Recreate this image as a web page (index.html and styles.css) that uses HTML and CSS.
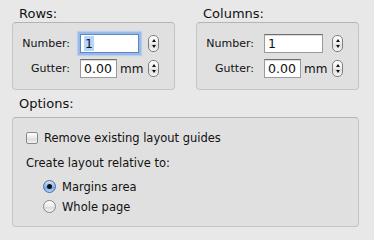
FILE: index.html
```html
<!DOCTYPE html>
<html lang="en">
<head>
    <meta charset="UTF-8">
    <title>Create Layout Guides</title>
    <link rel="stylesheet" href="styles.css">
</head>
<body>

<div class="dialog">
    <div class="top-row">
        <div class="group">
            <div class="group-title">Rows:</div>
            <div class="group-box grid-box">
                <div class="field">
                    <label class="field-label">Number:</label>
                    <span class="text-input wide focused"><span class="sel">1</span></span>
                    <span class="stepper"><i class="up"></i><i class="down"></i></span>
                </div>
                <div class="field">
                    <label class="field-label">Gutter:</label>
                    <span class="text-input narrow">0.00</span>
                    <span class="unit">mm</span>
                    <span class="stepper"><i class="up"></i><i class="down"></i></span>
                </div>
            </div>
        </div>
        <div class="group">
            <div class="group-title">Columns:</div>
            <div class="group-box grid-box">
                <div class="field">
                    <label class="field-label">Number:</label>
                    <span class="text-input wide">1</span>
                    <span class="stepper"><i class="up"></i><i class="down"></i></span>
                </div>
                <div class="field">
                    <label class="field-label">Gutter:</label>
                    <span class="text-input narrow">0.00</span>
                    <span class="unit">mm</span>
                    <span class="stepper"><i class="up"></i><i class="down"></i></span>
                </div>
            </div>
        </div>
    </div>

    <div class="group">
        <div class="group-title">Options:</div>
        <div class="group-box options-box">
            <div class="check-row">
                <span class="checkbox"></span>
                <span>Remove existing layout guides</span>
            </div>
            <div class="caption">Create layout relative to:</div>
            <div class="radio-row">
                <span class="radio on"></span>
                <span>Margins area</span>
            </div>
            <div class="radio-row">
                <span class="radio"></span>
                <span>Whole page</span>
            </div>
        </div>
    </div>
</div>

</body>
</html>
```

FILE: styles.css
```css
body {
    margin: 0;
    background: #e8e8e8;
    font-family: "DejaVu Sans", Verdana, sans-serif;
    font-size: 11px;
    color: #111;
}
.dialog {
    width: 347px;
    padding: 6px 0 0 12px;
}
.top-row {
    display: flex;
    gap: 21px;
    margin-bottom: 6px;
}
.top-row .group {
    width: 163px;
}
.group-title {
    font-size: 13px;
    line-height: 16px;
    padding-left: 7px;
}
.group-box {
    background: #e0e0e0;
    border: 1px solid #c4c4c4;
    border-top-color: #b4b4b4;
    border-radius: 4px;
    box-sizing: border-box;
}
.grid-box {
    height: 68px;
    padding: 11px 0 0 0;
    display: flex;
    flex-direction: column;
    gap: 6px;
}
.field {
    display: flex;
    align-items: center;
    width: 146px;
    height: 19px;
}
.field > * {
    flex-shrink: 0;
}
.field-label {
    width: 57px;
    text-align: right;
    padding-right: 10px;
    font-size: 11px;
}
.text-input {
    box-sizing: border-box;
    height: 19px;
    background: #fff;
    border: 1px solid #9a9a9a;
    border-top-color: #6e6e6e;
    box-shadow: inset 0 1px 1px rgba(0, 0, 0, 0.15);
    font-size: 12.5px;
    line-height: 17px;
    padding-left: 3px;
}
.text-input.wide {
    width: 59px;
}
.text-input.narrow {
    width: 37px;
}
.text-input.focused {
    border-color: #5d86c4;
    box-shadow: 0 0 0 2px #9ab9e6, 0 0 1px 3px #b9cfee;
}
.sel {
    background: #b5d5ff;
    padding: 0 1px;
}
.unit {
    font-size: 12px;
    padding-left: 3px;
}
.stepper {
    box-sizing: border-box;
    margin-left: auto;
    width: 11px;
    height: 17px;
    border: 1px solid #7f7f7f;
    border-radius: 5px;
    background: linear-gradient(#ffffff, #ececec 50%, #dcdcdc 51%, #f6f6f6);
    display: flex;
    flex-direction: column;
    align-items: center;
    justify-content: center;
    gap: 3px;
}
.stepper i {
    width: 0;
    height: 0;
    border-left: 2px solid transparent;
    border-right: 2px solid transparent;
}
.stepper .up {
    border-bottom: 3px solid #111;
}
.stepper .down {
    border-top: 3px solid #111;
}
.options-box {
    width: 347px;
    height: 110px;
    padding: 13px 0 0 13px;
    margin-top: 5px;
}
.check-row, .radio-row {
    display: flex;
    align-items: center;
    gap: 6px;
    font-size: 11.5px;
}
.check-row {
    height: 13px;
}
.caption {
    font-size: 11.5px;
    margin-top: 12px;
    margin-bottom: 10px;
}
.radio-row {
    height: 13px;
    margin-left: 17px;
    margin-bottom: 7px;
}
.checkbox {
    box-sizing: border-box;
    width: 12px;
    height: 12px;
    border: 1px solid #8a8a8a;
    border-radius: 2px;
    background: linear-gradient(#ffffff, #e6e6e6 55%, #d8d8d8 56%, #f4f4f4);
}
.radio {
    box-sizing: border-box;
    width: 13px;
    height: 13px;
    border: 1px solid #878787;
    border-radius: 50%;
    background: linear-gradient(#ffffff, #e8e8e8 55%, #dadada 56%, #f6f6f6);
    display: flex;
    align-items: center;
    justify-content: center;
}
.radio.on {
    border-color: #4b6ea3;
    background: linear-gradient(#cfe3f9, #8fb7ea 50%, #6b9fe0 51%, #b5d6fb);
}
.radio.on::after {
    content: "";
    width: 5px;
    height: 5px;
    border-radius: 50%;
    background: #111;
}
```
